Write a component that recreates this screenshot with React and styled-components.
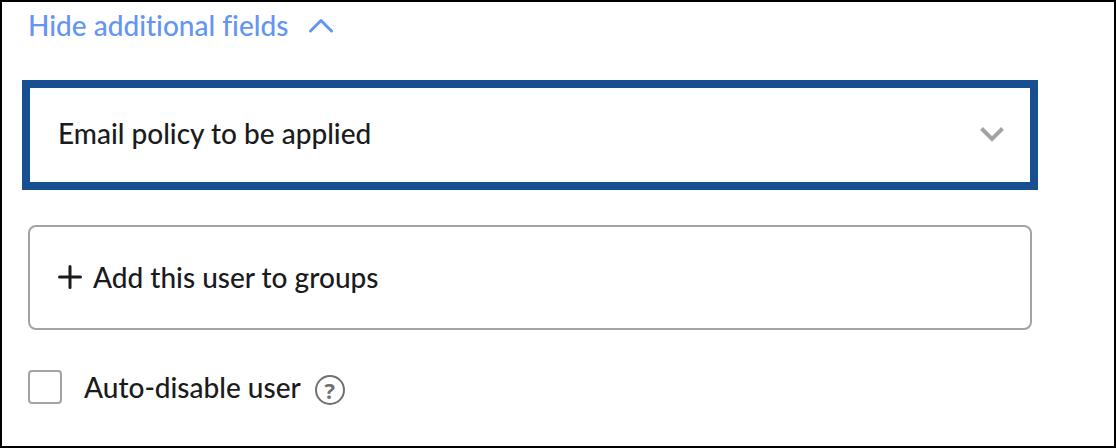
import React, { useState } from "react";
import styled, { createGlobalStyle } from "styled-components";

const GlobalStyle = createGlobalStyle`
  *, *::before, *::after { box-sizing: border-box; }
  body {
    margin: 0;
    background: #fff;
    color: #1a1b1d;
    font: 500 28px/36px Lato, "Open Sans", sans-serif;
    font-variant-ligatures: none;
  }
  button, select, input { font: inherit; font-variant-ligatures: none; color: inherit; margin: 0; }
`;

const Panel = styled.main`
  display: flex;
  flex-direction: column;
  align-items: stretch;
  padding: 5px 82px 41px 26px;
  border: 2px solid #000;
`;

const ToggleButton = styled.button`
  display: flex;
  align-items: center;
  align-self: flex-start;
  gap: 20px;
  padding: 0;
  border: 0;
  background: none;
  color: #6495f3;
  cursor: pointer;
`;

const SelectField = styled.div`
  display: grid;
  align-items: center;
  margin: 37px -6px 35px;
  & > * { grid-area: 1 / 1; }
`;

const Select = styled.select`
  appearance: none;
  width: 100%;
  height: 110px;
  padding: 0 64px 4px 28px;
  border: 8px solid #174f90;
  border-radius: 0;
  outline: 0;
  background: #fff;
`;

const SelectArrow = styled.svg`
  justify-self: end;
  margin: 0 34px 2px 0;
  pointer-events: none;
`;

const AddButton = styled.button`
  display: flex;
  align-items: center;
  gap: 11px;
  height: 105px;
  padding: 0 28px 2px;
  border: 2px solid #a2a3a5;
  border-radius: 8px;
  background: #fff;
  text-align: left;
  cursor: pointer;
`;

const OptionRow = styled.div`
  display: flex;
  align-items: flex-start;
  margin-top: 40px;
`;

const CheckLabel = styled.label`
  display: flex;
  align-items: center;
  gap: 22px;
  line-height: 34px;
`;

const Checkbox = styled.input`
  appearance: none;
  flex: none;
  width: 34px;
  height: 34px;
  border: 2px solid #a2a3a5;
  border-radius: 4px;
  background: #fff;
  &:checked { background: #6495f3; border-color: #6495f3; }
`;

const HelpButton = styled.button`
  display: grid;
  place-items: center;
  width: 30px;
  height: 30px;
  margin: 5px 0 0 14px;
  padding: 0;
  border: 2px solid #6f7073;
  border-radius: 50%;
  background: none;
  color: #6f7073;
  font-family: "Open Sans", sans-serif;
  font-size: 22px;
  font-weight: 700;
  line-height: 26px;
`;

export default function App() {
  const [open, setOpen] = useState(true);
  return (
    <>
      <GlobalStyle />
      <Panel>
        <ToggleButton type="button" aria-expanded={open} onClick={() => setOpen(!open)}>
          Hide additional fields
          <svg width="26" height="16" viewBox="0 0 26 16" fill="none" stroke="currentColor" strokeWidth="3" strokeLinecap="round" strokeLinejoin="round" aria-hidden="true">
            <path d="M2.500 14 13 3.500l10.500 10.500" />
          </svg>
        </ToggleButton>
        {open && (
          <>
            <SelectField>
              <Select aria-label="Email policy to be applied" defaultValue="">
                <option value="">Email policy to be applied</option>
              </Select>
              <SelectArrow width="24" height="16" viewBox="0 0 24 16" fill="none" stroke="#a2a3a6" strokeWidth="4" aria-hidden="true">
                <path d="M1.500 2.500 12 13 22.500 2.500" />
              </SelectArrow>
            </SelectField>
            <AddButton type="button">
              <svg width="24" height="24" viewBox="0 0 24 24" fill="none" stroke="currentColor" strokeWidth="3" strokeLinecap="round" aria-hidden="true">
                <path d="M12 1.500v21M1.500 12h21" />
              </svg>
              Add this user to groups
            </AddButton>
            <OptionRow>
              <CheckLabel>
                <Checkbox type="checkbox" />
                Auto-disable user
              </CheckLabel>
              <HelpButton type="button" aria-label="Help">?</HelpButton>
            </OptionRow>
          </>
        )}
      </Panel>
    </>
  );
}
